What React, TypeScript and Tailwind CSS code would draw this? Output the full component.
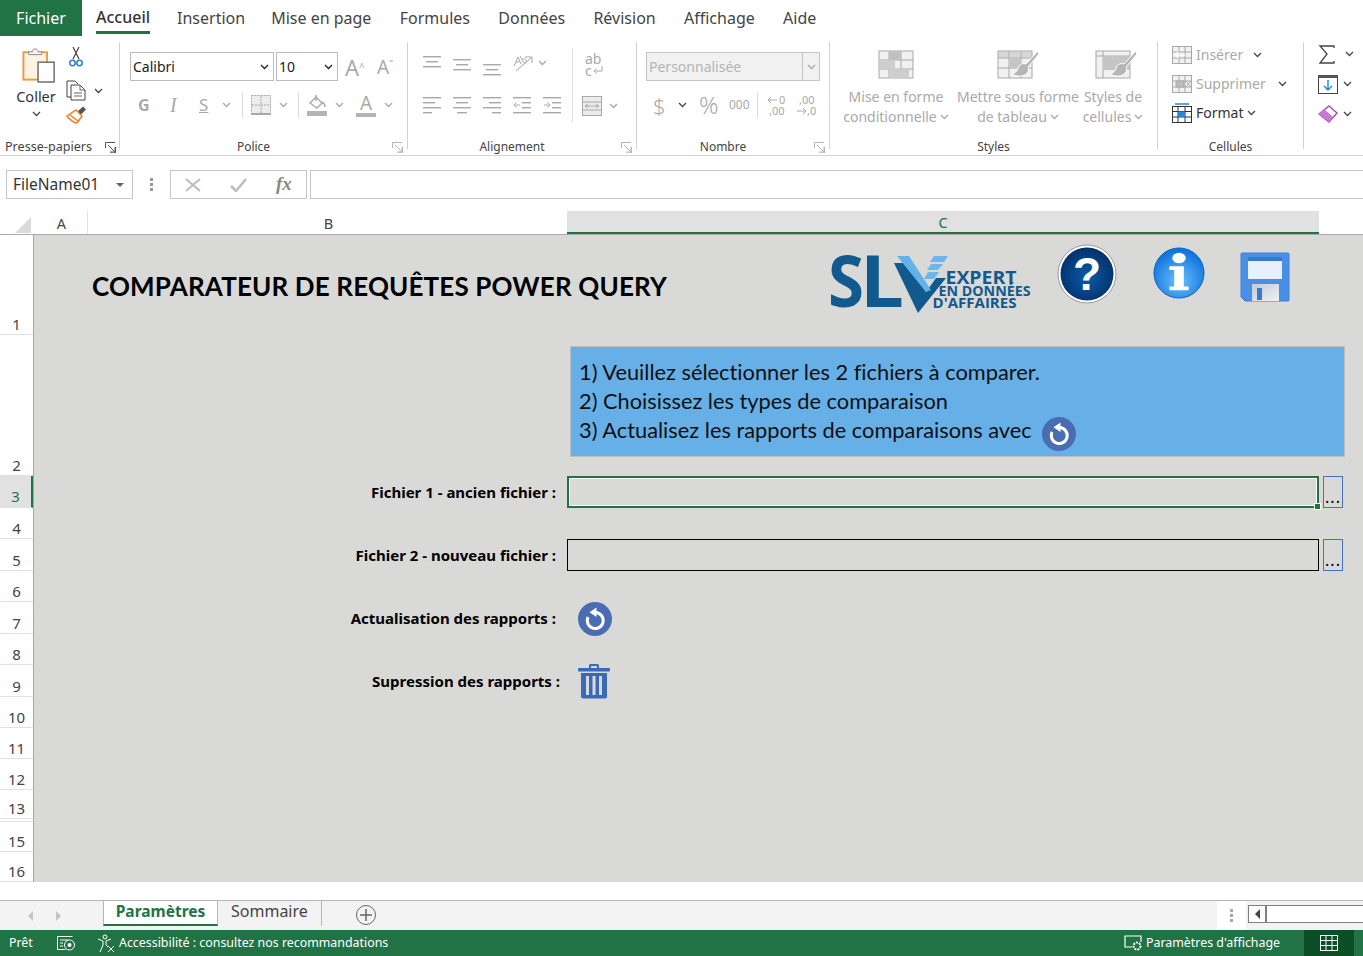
import type { ReactNode } from "react"

const G = "#a8a8a8"

const tabs = ["Mise en page", "Formules", "Données", "Révision", "Affichage", "Aide"]
const rowHeads: [string, string][] = [
  ["1", "h-[100px]"], ["2", "h-[141px]"], ["3", "h-[32px]"], ["4", "h-[31px]"], ["5", "h-[32px]"],
  ["6", "h-[31px]"], ["7", "h-[32px]"], ["8", "h-[31px]"], ["9", "h-[32px]"], ["10", "h-[31px]"],
  ["11", "h-[31px]"], ["12", "h-[31px]"], ["13", "h-[29px]"], ["", "h-[3px]"], ["15", "h-[30px]"], ["16", "h-[30px]"],
]

function Chev({ color = "#444", className = "" }: { color?: string; className?: string }) {
  return (
    <svg width="9" height="6" viewBox="0 0 9 6" className={className}>
      <path d="M1 1l3.5 3.5L8 1" fill="none" stroke={color} strokeWidth="1.3" />
    </svg>
  )
}

function Launcher({ color = "#b4b4b4" }: { color?: string }) {
  return (
    <svg width="11" height="11" viewBox="0 0 11 11" className="shrink-0">
      <path d="M.5 6V.5H10M3 3l6.500 6.500M10 5v5H5M10.500 5v6H5" fill="none" stroke={color} />
    </svg>
  )
}

function Lines({ rows, y = 0, color = G }: { rows: [number, number][]; y?: number; color?: string }) {
  return (
    <svg width="18" height="28" viewBox="0 0 18 28" className="shrink-0">
      {rows.map(([a, b], i) => (
        <rect key={i} x={a} y={y + i * 5} width={b - a} height="1.4" fill={color} />
      ))}
    </svg>
  )
}

function Indent({ flip }: { flip?: boolean }) {
  return (
    <svg width="18" height="28" viewBox="0 0 18 28" className="shrink-0">
      <g fill={G}>
        <rect x="0" y="1" width="18" height="1.4" />
        <rect x="0" y="16" width="18" height="1.4" />
        <rect x="9" y="6" width="9" height="1.4" />
        <rect x="9" y="11" width="9" height="1.4" />
      </g>
      <path d={flip ? "M1 9h6M4.500 6.500L7 9l-2.500 2.500" : "M7 9H1M3.500 6.500L1 9l2.500 2.500"} fill="none" stroke={G} />
    </svg>
  )
}

function GroupLabel({ children, launcher, launcherColor }: { children: ReactNode; launcher?: boolean; launcherColor?: string }) {
  return (
    <div className="flex h-[18px] items-center pr-[4px] pt-[2px] text-[12px] text-[#444]">
      <span className="flex-1 pr-[5px] text-center">{children}</span>
      {launcher && <Launcher color={launcherColor} />}
    </div>
  )
}

function Sep() {
  return <div className="my-[6px] w-px shrink-0 bg-[#d2d2d2]" />
}

function SmallSep({ className = "" }: { className?: string }) {
  return <div className={`w-px bg-[#dcdcdc] ${className}`} />
}

function Refresh({ size = 34 }: { size?: number }) {
  return (
    <svg width={size} height={size} viewBox="0 0 34 34" className="shrink-0">
      <circle cx="17" cy="17" r="17" fill="#4a6cb3" />
      <path d="M17.500 10.500a8 8 0 1 1-7.500 4.500" fill="none" stroke="#fff" strokeWidth="3" />
      <path d="M18.500 5.500v9.500l-7-4.700z" fill="#fff" />
    </svg>
  )
}

function Trash() {
  return (
    <svg width="32" height="36" viewBox="0 0 32 36" className="shrink-0">
      <g fill="#3c69b7">
        <path d="M11 5V2.500A1.500 1.500 0 0 1 12.500 1h7A1.500 1.500 0 0 1 21 2.500V5h-2V3h-6v2z" />
        <rect x="0" y="5" width="32" height="3.500" rx="1" />
        <path d="M3 10h26v23.500a2 2 0 0 1-2 2H5a2 2 0 0 1-2-2z" />
      </g>
      <g fill="#d9d9d7">
        <rect x="8" y="13" width="3" height="19" />
        <rect x="14.500" y="13" width="3" height="19" />
        <rect x="21" y="13" width="3" height="19" />
      </g>
    </svg>
  )
}

function SlvLogo() {
  const font = "'Open Sans', sans-serif"
  return (
    <svg width="202" height="72" viewBox="0 0 202 72" className="mt-[2px] shrink-0 overflow-visible">
      <text x="-2" y="61" fontFamily={font} fontWeight="700" fontSize="71" fill="#12598e" textLength="36" lengthAdjust="spacingAndGlyphs">S</text>
      <text x="30" y="61" fontFamily={font} fontWeight="700" fontSize="71" fill="#12598e" textLength="44" lengthAdjust="spacingAndGlyphs">L</text>
      <path d="M64 17h14l18 29 10-14h10L88 67z" fill="#12598e" />
      <path d="M67 10h12l22 34-5 2z" fill="#62b2e8" />
      <path d="M104 10h14l-4 6h-14zM101 18h12l-5 6H97zM98 26h11l-5 7H94z" fill="#6bb7ea" />
      <g fontFamily={font} fontWeight="700" fill="#12598e">
        <text x="115.500" y="38" fontSize="17" textLength="71" lengthAdjust="spacingAndGlyphs">EXPERT</text>
        <text x="108.500" y="50" fontSize="13.500" textLength="92" lengthAdjust="spacingAndGlyphs">EN DONNÉES</text>
        <text x="102.500" y="61.500" fontSize="13.500" textLength="84" lengthAdjust="spacingAndGlyphs">D'AFFAIRES</text>
      </g>
    </svg>
  )
}

function HelpIcon() {
  return (
    <svg width="60" height="60" viewBox="0 0 60 60" className="shrink-0">
      <defs>
        <radialGradient id="hb" cx="50%" cy="55%" r="55%">
          <stop offset="0" stopColor="#0a5ba8" />
          <stop offset="1" stopColor="#03306b" />
        </radialGradient>
      </defs>
      <circle cx="30" cy="30" r="29" fill="#fff" stroke="#9a9a9a" />
      <circle cx="30" cy="30" r="26.500" fill="url(#hb)" />
      <text x="30" y="46" textAnchor="middle" fontFamily="'Liberation Sans', sans-serif" fontWeight="700" fontSize="46" fill="#fff">?</text>
    </svg>
  )
}

function InfoIcon() {
  return (
    <svg width="52" height="52" viewBox="0 0 54 54" className="shrink-0">
      <defs>
        <radialGradient id="ib" cx="50%" cy="65%" r="60%">
          <stop offset="0" stopColor="#6cc0fb" />
          <stop offset="1" stopColor="#0f74dc" />
        </radialGradient>
      </defs>
      <circle cx="27" cy="27" r="26" fill="url(#ib)" stroke="#0a62c0" />
      <ellipse cx="27" cy="11.500" rx="7" ry="5.500" fill="#fff" />
      <path d="M17 20h15v21h5v4H17v-4h5V24h-5z" fill="#fff" />
    </svg>
  )
}

function SaveIcon() {
  return (
    <svg width="50" height="50" viewBox="0 0 50 50" className="shrink-0">
      <defs>
        <linearGradient id="sl" x1="0" y1="0" x2="1" y2="1">
          <stop offset="0" stopColor="#c4cbd6" />
          <stop offset="1" stopColor="#eef1f5" />
        </linearGradient>
      </defs>
      <path d="M1 2a1 1 0 0 1 1-1h46a1 1 0 0 1 1 1v46a1 1 0 0 1-1 1H5l-4-4z" fill="#4a8fe6" stroke="#3f7fd0" />
      <rect x="8" y="5" width="34" height="22" rx="1" fill="#e8f0fb" />
      <rect x="8" y="5" width="34" height="4" fill="#3a78cf" />
      <rect x="12" y="32" width="27" height="17" fill="url(#sl)" />
      <rect x="17" y="36" width="5" height="12" fill="#3c78d0" />
    </svg>
  )
}

function ClipboardIcon() {
  return (
    <svg width="34" height="38" viewBox="0 0 36 40" className="ml-[5px]">
      <rect x="1.500" y="6.500" width="25" height="29" fill="#fdf3e2" stroke="#ec9a3c" strokeWidth="2" />
      <path d="M7 9V6h4c0-4 6-4 6 0h4v3z" fill="#f4f4f4" stroke="#8a8a8a" />
      <rect x="17" y="17" width="17" height="21" fill="#fff" stroke="#666" strokeWidth="1.500" />
    </svg>
  )
}

function ScissorsIcon() {
  return (
    <svg width="14" height="21" viewBox="0 0 14 21">
      <path d="M4 13L10 1M10 13L4 1" stroke="#444" strokeWidth="1.200" fill="none" />
      <circle cx="3.500" cy="17" r="2.700" fill="none" stroke="#2a7fc9" strokeWidth="1.500" />
      <circle cx="10.500" cy="17" r="2.700" fill="none" stroke="#2a7fc9" strokeWidth="1.500" />
    </svg>
  )
}

function CopyIcon() {
  return (
    <svg width="21" height="21" viewBox="0 0 21 21">
      <path d="M5 17H1V1h8l3 3" fill="none" stroke="#444" />
      <path d="M5 5h9l5 5v10H5z" fill="#fff" stroke="#444" />
      <path d="M14 5v5h5M8 13h8M8 16h8" fill="none" stroke="#666" />
    </svg>
  )
}

function BrushIcon() {
  return (
    <svg width="21" height="20" viewBox="0 0 21 20">
      <path d="M10 5l6 6-5 7c-3 0-8-4-10-7z" fill="#fff" stroke="#e9821f" strokeWidth="1.500" />
      <path d="M4 10l8 6" stroke="#e9821f" strokeWidth="1.500" />
      <path d="M12 6l5-4.500 3 3-5 5z" fill="#555" />
    </svg>
  )
}

function BigTable({ children, className = "" }: { children: ReactNode; className?: string }) {
  return (
    <svg width="42" height="34" viewBox="0 0 42 34" className={className}>
      {children}
    </svg>
  )
}

function PaintOver() {
  return <path d="M41 6L29 19c-3-1-6 0-7 2-1 4-3 7-7 8 5 3 12 3 15-1 2-2 2-4 1-6L42 9z" fill="#b5b5b5" stroke="#fff" />
}

function Cells({ mark }: { mark: ReactNode }) {
  return (
    <svg width="20" height="18" viewBox="0 0 20 18">
      <rect x=".5" y=".5" width="19" height="17" fill="#f2f2f2" stroke={G} />
      <path d="M.5 6h19M.5 12h19M7 .5v17M13 .5v17" stroke={G} />
      {mark}
    </svg>
  )
}

function CellAction({ icon, label, chevGap, muted }: { icon: ReactNode; label: string; chevGap: string; muted?: boolean }) {
  return (
    <div className={`flex h-[29px] items-center gap-[4px] pl-[14px] text-[14px] ${muted ? "text-[#a9a9a9]" : "text-[#333]"}`}>
      {icon}
      <span>{label}</span>
      <Chev className={chevGap} />
    </div>
  )
}

function StyleButton({ icon, top, bottom, width }: { icon: ReactNode; top: string; bottom: string; width: string }) {
  return (
    <div className={`flex flex-col items-center text-[14px] leading-[20px] text-[#a9a9a9] ${width}`}>
      <div className="flex h-[43px] items-end">{icon}</div>
      <div className="mt-[8px] whitespace-nowrap">{top}</div>
      <div className="flex items-center gap-[3px] whitespace-nowrap">
        {bottom}
        <Chev color={G} />
      </div>
    </div>
  )
}

function Ribbon() {
  return (
    <div className="flex h-[120px] shrink-0 border-b border-[#d4d4d4] bg-white shadow-[0_2px_3px_rgba(0,0,0,0.08)]">
      {/* presse-papiers */}
      <div className="flex w-[119px] shrink-0 flex-col">
        <div className="flex h-[101px] pl-[16px] pt-[10px]">
          <div className="flex w-[40px] flex-col items-center">
            <ClipboardIcon />
            <div className="mt-[2px] text-[14.500px] leading-[20px] text-[#333]">Coller</div>
            <Chev className="mt-[5px]" />
          </div>
          <div className="ml-[10px] flex flex-col">
            <div className="ml-[3px] h-[30px]"><ScissorsIcon /></div>
            <div className="flex h-[29px] items-center gap-[7px]"><CopyIcon /><Chev /></div>
            <BrushIcon />
          </div>
        </div>
        <div className="flex h-[18px] items-center justify-between pl-[5px] pr-[3px] pt-[2px] text-[12.600px] text-[#444]">
          <span>Presse-papiers</span>
          <Launcher color="#555" />
        </div>
      </div>
      <Sep />

      {/* police */}
      <div className="flex w-[287px] shrink-0 flex-col">
        <div className="h-[101px] pt-[16px]">
          <div className="flex h-[29px] items-center pl-[10px]">
            <div className="flex h-[29px] w-[144px] items-center justify-between border border-[#bcbcbc] pl-[2px] pr-[4px] text-[14px] text-[#222]">
              Calibri <Chev color="#222" />
            </div>
            <div className="ml-[2px] flex h-[29px] w-[62px] items-center justify-between border border-[#bcbcbc] pl-[2px] pr-[4px] text-[14px] text-[#222]">
              10 <Chev color="#222" />
            </div>
            <span className="ml-[7px] w-[32px] text-[22px] leading-[26px] text-[#a9a9a9]">A<sup className="text-[10px]">^</sup></span>
            <span className="text-[19px] leading-[26px] text-[#a9a9a9]">A<sup className="text-[10px]">ˇ</sup></span>
          </div>
          <div className="mt-[9px] flex h-[30px] items-center pl-[18px] text-[#a9a9a9]">
            <span className="w-[32px] text-[16px] font-bold">G</span>
            <span className="w-[29px] font-['Liberation_Serif',serif] text-[20px] italic">I</span>
            <span className="w-[20px] text-[17px] underline">S</span>
            <Chev color={G} className="ml-[3px]" />
            <SmallSep className="ml-[11px] h-[26px]" />
            <svg width="20" height="20" viewBox="0 0 20 20" className="ml-[8px]">
              <rect x=".5" y=".5" width="19" height="19" fill="#ececec" stroke={G} strokeDasharray="2 1" />
              <path d="M10 1v18M1 10h18" stroke={G} strokeDasharray="2 1" />
              <path d="M0 19h20" stroke={G} strokeWidth="2" />
            </svg>
            <Chev color={G} className="ml-[8px]" />
            <SmallSep className="ml-[10px] h-[26px]" />
            <svg width="20" height="22" viewBox="0 0 20 22" className="ml-[8px]">
              <path d="M3 9l6-6 6 6-5 5z" fill="none" stroke={G} strokeWidth="1.400" />
              <path d="M9 1l0 6M15 8c2 1 3 3 3 5" stroke={G} strokeWidth="1.400" fill="none" />
              <rect x="0" y="17" width="20" height="5" fill="#b4b4b0" />
            </svg>
            <Chev color={G} className="ml-[8px]" />
            <div className="ml-[12px] flex w-[20px] flex-col items-center">
              <span className="text-[19px] leading-[18px]">A</span>
              <div className="mt-[1px] h-[4px] w-[20px] bg-[#b4b4b0]" />
            </div>
            <Chev color={G} className="ml-[8px]" />
          </div>
        </div>
        <GroupLabel launcher>Police</GroupLabel>
      </div>
      <Sep />

      {/* alignement */}
      <div className="flex w-[228px] shrink-0 flex-col">
        <div className="flex h-[101px] pl-[15px] pt-[12px]">
          <div className="flex w-[149px] flex-col">
            <div className="flex h-[34px] items-start gap-[12px]">
              <Lines rows={[[0, 18], [3, 15], [0, 18]]} y={8} />
              <Lines rows={[[0, 18], [3, 15], [0, 18]]} y={11} />
              <Lines rows={[[0, 18], [3, 15], [0, 18]]} y={16} />
              <div className="flex items-center gap-[4px] pt-[6px]">
                <svg width="21" height="18" viewBox="0 0 21 18">
                  <path d="M3 17L18 4M12 3h7v6" fill="none" stroke={G} />
                  <path d="M1 12l4-9 3 7M2.500 8.500l4-1M7 2l4 7c2 1 3-1 2-3s-3-1-4 0" fill="none" stroke={G} />
                </svg>
                <Chev color={G} />
              </div>
            </div>
            <div className="mt-[14px] flex gap-[12px]">
              <Lines rows={[[0, 18], [0, 12], [0, 18], [0, 9]]} y={1} />
              <Lines rows={[[0, 18], [3, 15], [0, 18], [4, 14]]} y={1} />
              <Lines rows={[[0, 18], [6, 18], [0, 18], [9, 18]]} y={1} />
              <Indent />
              <Indent flip />
            </div>
          </div>
          <SmallSep className="h-[74px]" />
          <div className="ml-[12px] flex flex-col">
            <div className="flex h-[34px] w-[20px] flex-col items-start pt-[5px] text-[14px] leading-[12px] text-[#a9a9a9]">
              <span>ab</span>
              <span className="flex items-center">c
                <svg width="11" height="10" viewBox="0 0 11 10"><path d="M10 0v5H2M4.500 2.500L2 5l2.500 2.500" fill="none" stroke={G} /></svg>
              </span>
            </div>
            <div className="ml-[-3px] mt-[14px] flex items-center gap-[7px]">
              <svg width="20" height="20" viewBox="0 0 20 20">
                <rect x=".5" y=".5" width="19" height="19" fill="#ececec" stroke={G} />
                <path d="M.5 6h19M.5 14h19" stroke={G} />
                <path d="M3 10h14M6 8l-3 2 3 2M14 8l3 2-3 2" fill="none" stroke={G} />
              </svg>
              <Chev color={G} />
            </div>
          </div>
        </div>
        <GroupLabel launcher>Alignement</GroupLabel>
      </div>
      <Sep />

      {/* nombre */}
      <div className="flex w-[192px] shrink-0 flex-col">
        <div className="h-[101px] pt-[16px]">
          <div className="ml-[9px] flex h-[29px] w-[174px] items-center border border-[#c6c6c6] bg-[#f1f1f1] pl-[2px] text-[14px] text-[#b4b4b4]">
            <span className="flex-1">Personnalisée</span>
            <div className="flex h-full w-[17px] items-center justify-center border-l border-[#c6c6c6]"><Chev color={G} /></div>
          </div>
          <div className="mt-[9px] flex h-[30px] items-center pl-[16px] text-[#a9a9a9]">
            <span className="w-[22px] text-[22px] font-light">$</span>
            <Chev className="ml-[3px]" />
            <span className="ml-[12px] w-[30px] text-[24px] font-light leading-[24px]">%</span>
            <span className="w-[28px] text-[12px]">000</span>
            <SmallSep className="h-[26px]" />
            <svg width="24" height="28" viewBox="0 0 24 28" className="ml-[8px]">
              <path d="M11 9H2M5 6L2 9l3 3" fill="none" stroke={G} />
              <text x="13" y="13" fontSize="11" fill={G} fontFamily="'Noto Sans', sans-serif">0</text>
              <text x="3" y="24" fontSize="11" fill={G} fontFamily="'Noto Sans', sans-serif">,00</text>
            </svg>
            <svg width="24" height="28" viewBox="0 0 24 28" className="ml-[6px]">
              <text x="3" y="13" fontSize="11" fill={G} fontFamily="'Noto Sans', sans-serif">,00</text>
              <path d="M1 20h9M7 17l3 3-3 3" fill="none" stroke={G} />
              <text x="11" y="24" fontSize="11" fill={G} fontFamily="'Noto Sans', sans-serif">,0</text>
            </svg>
          </div>
        </div>
        <GroupLabel launcher>Nombre</GroupLabel>
      </div>
      <Sep />

      {/* styles */}
      <div className="flex w-[327px] shrink-0 flex-col">
        <div className="flex h-[101px] pl-[14px]">
          <StyleButton
            width="w-[104px]"
            top="Mise en forme"
            bottom="conditionnelle"
            icon={
              <BigTable>
                <rect x="4" y="6" width="34" height="27" fill="#f1f1f1" stroke={G} />
                <path d="M4 15h34M4 24h34M14 6v27M26 6v27" stroke={G} />
                <rect x="14" y="6" width="12" height="9" fill="#c0c0c0" />
                <rect x="4" y="15" width="16" height="9" fill="#cecece" />
                <rect x="14" y="24" width="20" height="9" fill="#cecece" />
              </BigTable>
            }
          />
          <StyleButton
            width="w-[124px] ml-[8px]"
            top="Mettre sous forme"
            bottom="de tableau"
            icon={
              <BigTable>
                <rect x="1" y="6" width="34" height="27" fill="#f1f1f1" stroke={G} />
                <path d="M1 13h34M1 23h34M12 6v27M24 6v27" stroke={G} />
                <rect x="12" y="13" width="12" height="10" fill="#c5c5c5" />
                <rect x="1" y="6" width="34" height="7" fill="#bdbdbd" opacity=".5" />
                <PaintOver />
              </BigTable>
            }
          />
          <StyleButton
            width="w-[66px]"
            top="Styles de"
            bottom="cellules"
            icon={
              <BigTable className="ml-[6px]">
                <rect x="1" y="6" width="34" height="27" fill="#f1f1f1" stroke={G} />
                <path d="M1 11h34M8 6v27" stroke={G} />
                <rect x="8" y="11" width="27" height="14" fill="#c5c5c5" />
                <PaintOver />
              </BigTable>
            }
          />
        </div>
        <div className="flex h-[18px] items-center justify-center pt-[2px] text-[12px] text-[#444]">Styles</div>
      </div>
      <Sep />

      {/* cellules */}
      <div className="flex w-[145px] shrink-0 flex-col">
        <div className="h-[101px] pt-[4px]">
          <CellAction
            muted
            chevGap="ml-[6px]"
            label="Insérer"
            icon={<Cells mark={<path d="M13 9H4M7 6L4 9l3 3" fill="none" stroke="#fff" strokeWidth="1.500" />} />}
          />
          <CellAction
            muted
            chevGap="ml-[8px]"
            label="Supprimer"
            icon={<Cells mark={<path d="M4 6h8v6H4zM14 6l5 6M19 6l-5 6" fill="#bdbdbd" stroke={G} />} />}
          />
          <CellAction
            chevGap="-ml-[1px]"
            label="Format"
            icon={
              <svg width="20" height="20" viewBox="0 0 20 20">
                <rect x=".5" y="3.500" width="19" height="16" fill="#fff" stroke="#333" />
                <path d="M.5 8.500h19M.5 14h19M6 3.500v16M13 3.500v16" stroke="#333" />
                <rect x="6" y="8.500" width="7" height="5.500" fill="#2a86d8" />
                <path d="M3 1h14" stroke="#2a86d8" strokeWidth="1.500" />
              </svg>
            }
          />
        </div>
        <div className="flex h-[18px] items-center justify-center pt-[2px] text-[12px] text-[#444]">Cellules</div>
      </div>
      <Sep />

      {/* edition */}
      <div className="flex flex-1 flex-col pl-[14px] pt-[3px]">
        <div className="flex h-[30px] items-center gap-[9px]">
          <svg width="18" height="19" viewBox="0 0 18 19"><path d="M16 3V1H2l7 8-7 9h14v-2" fill="none" stroke="#444" strokeWidth="1.300" /></svg>
          <Chev />
        </div>
        <div className="flex h-[30px] items-center gap-[5px]">
          <svg width="20" height="19" viewBox="0 0 20 19">
            <rect x=".5" y=".5" width="19" height="18" fill="#fff" stroke="#444" />
            <rect x="0" y="0" width="20" height="3" fill="#555" />
            <path d="M10 5v10M6 11l4 4 4-4" fill="none" stroke="#1e88d8" strokeWidth="1.400" />
          </svg>
          <Chev />
        </div>
        <div className="flex h-[30px] items-center gap-[5px]">
          <svg width="20" height="19" viewBox="0 0 20 19">
            <path d="M11 1l8 7-8 9-10-8z" fill="#fff" stroke="#a845b8" strokeWidth="1.400" />
            <path d="M1 9l5-5 9 8-4 5z" fill="#c77ad2" />
          </svg>
          <Chev />
        </div>
      </div>
    </div>
  )
}

function FormulaBar() {
  return (
    <div className="flex h-[55px] shrink-0 items-start bg-white pl-[6px] pt-[14px]">
      <div className="flex h-[29px] w-[127px] items-center justify-between border border-[#c6c6c6] pl-[6px] pr-[8px] text-[15.500px] text-[#333]">
        FileName01
        <div className="h-0 w-0 border-x-[4px] border-t-[4px] border-x-transparent border-t-[#666]" />
      </div>
      <div className="flex h-[29px] w-[37px] flex-col items-center justify-center gap-[2px]">
        <div className="h-[3px] w-[3px] bg-[#999]" />
        <div className="h-[3px] w-[3px] bg-[#999]" />
        <div className="h-[3px] w-[3px] bg-[#999]" />
      </div>
      <div className="flex h-[29px] w-[137px] items-center border border-[#c6c6c6] pl-[14px]">
        <svg width="16" height="14" viewBox="0 0 16 14"><path d="M1 1l14 12M15 1L1 13" stroke="#bdbdbd" strokeWidth="2" /></svg>
        <svg width="17" height="14" viewBox="0 0 17 14" className="ml-[29px]"><path d="M1 8l5 5L16 1" fill="none" stroke="#bdbdbd" strokeWidth="2.500" /></svg>
        <span className="ml-[29px] font-['Liberation_Serif',serif] text-[19px] font-bold italic text-[#888]">fx</span>
      </div>
      <div className="ml-[3px] h-[29px] flex-1 border border-r-0 border-[#c6c6c6]" />
    </div>
  )
}

function ColumnHeaders() {
  return (
    <div className="flex h-[24px] shrink-0 border-b border-[#a9a9a9] bg-white text-[14.500px] text-[#444]">
      <div className="flex w-[34px] items-end justify-end pb-[1px] pr-[3px]">
        <div className="h-0 w-0 border-b-[16px] border-l-[16px] border-b-[#dadada] border-l-transparent" />
      </div>
      <div className="flex w-[54px] items-center justify-center border-r border-[#e2e2e2] pl-[2px] pt-[3px]">A</div>
      <div className="flex w-[479px] items-center justify-center pl-[2px] pt-[3px]">B</div>
      <div className="flex w-[752px] items-center justify-center border-b-2 border-[#217346] bg-[#e1e1e1] pt-[3px] text-[#217346]">C</div>
      <div className="flex-1" />
    </div>
  )
}

function RowHeaders() {
  return (
    <div className="flex w-[34px] shrink-0 flex-col border-r border-[#a9a9a9] bg-white text-[15px] leading-[20px] text-[#444]">
      {rowHeads.map(([label, h], i) => (
        <div
          key={i}
          className={`flex items-end justify-center overflow-hidden border-b border-[#e1e1e1] ${h} ${
            label === "3" ? "border-r-2 border-r-[#217346] bg-[#e1e1e1] pb-[1px] text-[#217346]" : ""
          }`}
        >
          {label}
        </div>
      ))}
    </div>
  )
}

function DotsButton({ row }: { row: string }) {
  return (
    <div className={`${row} col-start-4 ml-[4px] flex h-[32px] w-[20px] items-end justify-center border border-[#4472c4] font-['Noto_Sans',sans-serif] text-[16px] leading-[20px] tracking-[1px] text-black`}>
      ...
    </div>
  )
}

const labelClass = "flex items-center justify-end font-['Noto_Sans',sans-serif] text-[15px] font-bold whitespace-nowrap"

function Sheet() {
  return (
    <div className="grid h-[647px] flex-1 grid-cols-[54px_479px_752px_44px] grid-rows-[100px_141px_32px_31px_32px_31px_32px_31px_32px_1fr] bg-[#d9d9d7] font-['Lato',sans-serif] text-black [font-variant-ligatures:none]">
      {/* titre et logos */}
      <div className="col-span-4 col-start-1 row-start-1 flex items-start pl-[58px] pt-[9px]">
        <h1 className="mt-[25px] w-[738px] shrink-0 text-[26px] font-bold leading-[34px] tracking-[0.15px]">
          COMPARATEUR DE REQUÊTES POWER QUERY
        </h1>
        <SlvLogo />
        <div className="ml-[25px]"><HelpIcon /></div>
        <div className="ml-[36px] mt-[3px]"><InfoIcon /></div>
        <div className="ml-[35px] mt-[8px]"><SaveIcon /></div>
      </div>

      {/* consignes */}
      <div className="col-span-2 col-start-3 row-start-2 pb-[19px] pl-[3px] pr-[18px] pt-[11px]">
        <div className="h-[111px] border border-[#bdbdbd] bg-[#67afe7] pl-[8px] pt-[10px] text-[21.800px] leading-[29px] text-[#111]">
          <div>1) Veuillez sélectionner les 2 fichiers à comparer.</div>
          <div>2) Choisissez les types de comparaison</div>
          <div className="flex h-[29px] items-center gap-[10px]">
            <span>3) Actualisez les rapports de comparaisons avec</span>
            <span className="mt-[8px]"><Refresh /></span>
          </div>
        </div>
      </div>

      <div className={`col-start-2 row-start-3 pr-[11px] ${labelClass}`}>Fichier 1 - ancien fichier :</div>
      <div className="relative col-start-3 row-start-3 border-2 border-[#217346]">
        <div className="h-full border border-white" />
        <div className="absolute -bottom-[4px] -right-[4px] h-[7px] w-[7px] border border-white bg-[#217346]" />
      </div>
      <DotsButton row="row-start-3" />

      <div className={`col-start-2 row-start-5 pr-[11px] ${labelClass}`}>Fichier 2 - nouveau fichier :</div>
      <div className="col-start-3 row-start-5 border border-black" />
      <DotsButton row="row-start-5" />

      <div className={`col-start-2 row-start-7 pr-[11px] ${labelClass}`}>Actualisation des rapports :</div>
      <div className="col-start-3 row-start-7 pl-[11px]"><Refresh /></div>

      <div className={`col-start-2 row-start-9 pr-[7px] ${labelClass}`}>Supression des rapports :</div>
      <div className="col-start-3 row-start-9 -mt-[2px] pl-[11px]"><Trash /></div>
    </div>
  )
}

function SheetTabs() {
  return (
    <div className="flex h-[30px] shrink-0 border-t border-[#b5b5b5] bg-[#f3f3f3] text-[16px]">
      <div className="flex w-[103px] items-center gap-[23px] pl-[28px]">
        <div className="h-0 w-0 border-y-[5px] border-r-[5px] border-y-transparent border-r-[#c4c4c4]" />
        <div className="h-0 w-0 border-y-[5px] border-l-[5px] border-y-transparent border-l-[#c4c4c4]" />
      </div>
      <div className="flex h-[25px] w-[115px] items-center justify-center border-x border-b-2 border-x-[#b5b5b5] border-b-[#217346] bg-white pb-[2px] text-[15.500px] font-bold text-[#217346]">
        Paramètres
      </div>
      <div className="flex h-[25px] w-[104px] items-center border-r border-[#b5b5b5] pb-[6px] pl-[13px] text-[#444]">Sommaire</div>
      <div className="ml-[34px] mt-[4px] flex h-[20px] w-[20px] items-center justify-center rounded-full border-[1.500px] border-[#666]">
        <svg width="12" height="12" viewBox="0 0 12 12"><path d="M6 0v12M0 6h12" stroke="#666" strokeWidth="1.500" /></svg>
      </div>
      <div className="ml-[841px] flex w-[29px] flex-col items-center justify-center gap-[2px] bg-white">
        <div className="h-[3px] w-[3px] bg-[#a8a8a8]" />
        <div className="h-[3px] w-[3px] bg-[#a8a8a8]" />
        <div className="h-[3px] w-[3px] bg-[#a8a8a8]" />
      </div>
      <div className="ml-[2px] mt-[4px] flex h-[18px] flex-1 border border-r-0 border-[#808080] bg-white">
        <div className="flex w-[18px] items-center justify-center border-r-2 border-[#808080]">
          <div className="h-0 w-0 border-y-[5px] border-r-[5px] border-y-transparent border-r-[#444]" />
        </div>
      </div>
    </div>
  )
}

function StatusBar() {
  return (
    <div className="flex h-[26px] shrink-0 items-center bg-[#217346] text-[12.400px] text-white">
      <span className="ml-[9px] w-[48px] pt-[1px]">Prêt</span>
      <svg width="19" height="16" viewBox="0 0 19 16">
        <path d="M.5 1.500h15M.5 1.500v13h8M3 5h8M3 8h3M3 11h3" stroke="#fff" fill="none" />
        <circle cx="12.500" cy="10" r="5" fill="none" stroke="#fff" />
        <circle cx="12.500" cy="10" r="2" fill="#fff" />
      </svg>
      <svg width="19" height="19" viewBox="0 0 19 19" className="ml-[21px]">
        <circle cx="8" cy="3" r="2" fill="none" stroke="#fff" />
        <path d="M1 5l5 2v4l-3 7M14 5l-5 2v4l2 2M11 12l6 6M17 12l-6 6" fill="none" stroke="#fff" />
      </svg>
      <span className="ml-[3px] pt-[1px]">Accessibilité : consultez nos recommandations</span>
      <svg width="19" height="16" viewBox="0 0 19 16" className="ml-auto">
        <path d="M8 12H1V1h16v6" fill="none" stroke="#fff" strokeWidth="1.200" />
        <circle cx="13" cy="11" r="3.500" fill="none" stroke="#fff" strokeWidth="2" strokeDasharray="2 1" />
      </svg>
      <span className="ml-[3px] w-[158px] pt-[1px]">Paramètres d'affichage</span>
      <div className="flex h-full w-[50px] items-center justify-center bg-[#0a4f26]">
        <svg width="18" height="16" viewBox="0 0 18 16">
          <rect x=".5" y=".5" width="17" height="15" fill="none" stroke="#fff" />
          <path d="M6 0v16M12 0v16M0 5.500h18M0 10.500h18" stroke="#fff" />
        </svg>
      </div>
      <div className="w-[9px]" />
    </div>
  )
}

export default function App() {
  return (
    <div className="flex h-[956px] w-[1363px] flex-col overflow-hidden bg-white font-['Noto_Sans',sans-serif]">
      <div className="flex h-[36px] shrink-0 items-start text-[16px] text-[#444]">
        <div className="flex h-[36px] w-[82px] items-center justify-center bg-[#217346] text-white">Fichier</div>
        <div className="ml-[14px] flex h-[34px] flex-col items-center justify-center border-b-[3px] border-[#217346] pt-[3px] font-medium text-[#333]">Accueil</div>
        <span className="ml-[27px] flex h-[36px] items-center">Insertion</span>
        <div className="ml-[26px] flex h-[36px] items-center gap-[28.300px]">
          {tabs.map((t) => (
            <span key={t}>{t}</span>
          ))}
        </div>
      </div>
      <Ribbon />
      <FormulaBar />
      <ColumnHeaders />
      <div className="flex shrink-0">
        <RowHeaders />
        <Sheet />
      </div>
      <div className="h-[18px] shrink-0 bg-white" />
      <SheetTabs />
      <StatusBar />
    </div>
  )
}
